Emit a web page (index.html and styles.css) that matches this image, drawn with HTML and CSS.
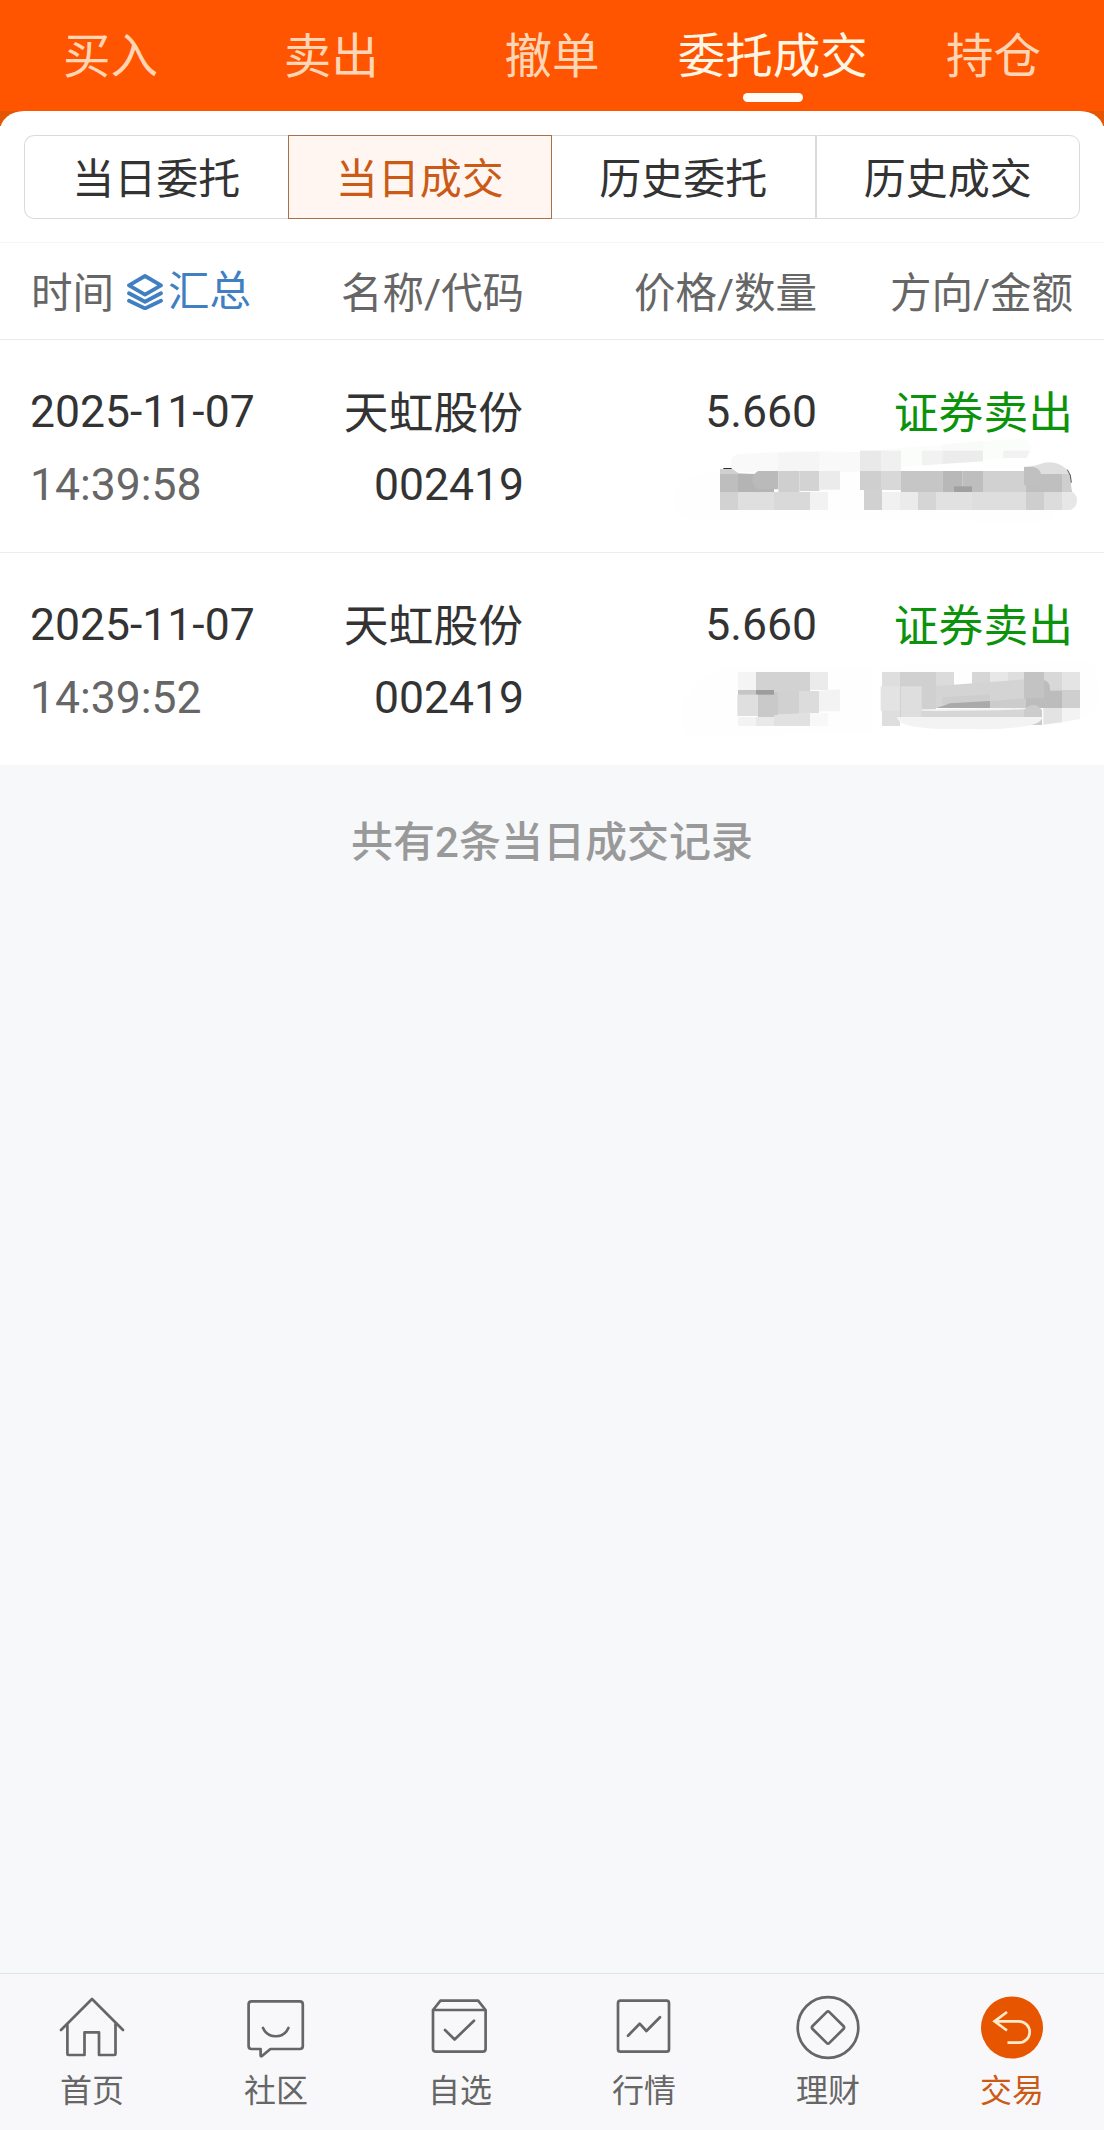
FILE: index.html
```html
<!DOCTYPE html>
<html lang="zh-CN">
<head>
<meta charset="utf-8">
<title>当日成交</title>
<link rel="stylesheet" href="styles.css">
</head>
<body>
<div class="app">
  <header class="top-tabs">
    <div class="top-tab">买入</div>
    <div class="top-tab">卖出</div>
    <div class="top-tab">撤单</div>
    <div class="top-tab top-tab-active">委托成交</div>
    <div class="top-tab">持仓</div>
  </header>
  <div class="panel-wrap">
    <div class="panel">
      <div class="segments">
        <div class="segment">当日委托</div>
        <div class="segment segment-active">当日成交</div>
        <div class="segment">历史委托</div>
        <div class="segment">历史成交</div>
      </div>
    </div>
  </div>
  <div class="grid list-head">
    <div class="head-time">时间
      <span class="summary"><svg class="layers" viewBox="0 0 36 36"><path d="M18 2 L34 11.3 L18 20.6 L2 11.3 Z M2 19.3 L18 27.8 L34 19.3 M2 26.8 L18 34.4 L34 26.8"/></svg>汇总</span>
    </div>
    <div>名称/代码</div>
    <div>价格/数量</div>
    <div>方向/金额</div>
  </div>
  <div class="grid record">
    <div class="cell"><span>2025-11-07</span><span class="muted">14:39:58</span></div>
    <div class="cell"><span class="name">天虹股份</span><span>002419</span></div>
    <div class="cell"><span>5.660</span></div>
    <div class="cell"><span class="name sell">证券卖出</span></div>
    <svg class="mask" viewBox="0 0 1332 300">
      <path fill="#fefefe" d="M180 122 Q60 135 42 190 Q40 265 90 267 L900 270 Q1120 290 1180 265 V120 Z"/>
      <path fill="#f9f9f9" d="M240 72 L400 64 L600 66 V125 H240 Q212 120 212 97 Q212 74 240 72Z"/>
      <path fill="#f5f5f5" d="M355 70 L478 65 V125 H355Z"/>
      <path fill="#fbfdfb" d="M600 64 L1085 24 Q1112 28 1114 50 Q1110 82 1080 82 L970 90 V112 H600Z"/>
      <path fill="#f9fbf8" d="M847 44 L970 32 V70 H847Z"/>
      <path fill="#e9e9e9" d="M600 62h63v62h-63z"/><path fill="#f0f0f0" d="M663 62h60v62h-60z"/>
      <path fill="#f2f2f2" d="M785 62h62v40l-62 5z"/><path fill="#ececec" d="M847 62h122v32l-122 8z"/><path fill="#f2f2f2" d="M1030 62h80l-10 22h-70z"/>
      <path fill="#fff" d="M735 110 L1020 92 L1130 108 V123 H723Z"/>
      <path fill="#d0d0d0" d="M180 117h37l18 12 50 3v54H180z"/><path fill="#333" d="M190 114h25v3h-25z"/>
      <path fill="#bebebe" d="M180 132h54v54h-54z"/><path fill="#b4b4b4" d="M234 132h108v54H234z"/>
      <path fill="#bababa" d="M295 123h60v55h-60q-18-8-18-27t18-28z"/>
      <path fill="#cfcfcf" d="M355 123h63v63h-63z"/><path fill="#d3d3d3" d="M418 123h60v60h-60z"/><path fill="#ebebeb" d="M478 123h62v56h-62z"/>
      <path fill="#d2d2d2" d="M180 186h54v54h-54z"/><path fill="#dfdfdf" d="M234 186h108v54H234z"/><path fill="#d9d9d9" d="M342 186h108v54H342z"/><path fill="#f2f2f2" d="M450 186h54v54h-54z"/>
      <path fill="#cfcfcf" d="M600 123h63v57h-63z"/><path fill="#d8d8d8" d="M663 123h60v57h-60z"/>
      <path fill="#c6c6c6" d="M723 123h124v63H723z"/><path fill="#b8b8b8" d="M847 123h61v63h-61z"/><path fill="#bebebe" d="M908 123h61v63h-61z"/>
      <path fill="#d1d1d1" d="M969 123h129v63H969z"/>
      <path fill="#dfdfdf" d="M1092 110 Q1130 108 1150 99 Q1190 90 1220 118 L1233 140 H1092Z"/>
      <path fill="#cfcfcf" d="M1206 132h27q-2 36 4 54h-31z"/><path fill="#bfbfbf" d="M1098 132h108v54h-108z"/>
      <path fill="#c0c0c0" d="M1092 111h30q22 8 22 28 0 20-22 27h-30z"/>
      <path fill="none" stroke="#555" stroke-width="3" d="M1222 119q12 15 12 39"/>
      <path fill="#a0a0a0" d="M882 169h54v17h-54z"/>
      <path fill="#d1d1d1" d="M612 180h54v60h-54z"/><path fill="#f1f1f1" d="M666 186h54v54h-54z"/><path fill="#ebebeb" d="M720 186h54v54h-54z"/>
      <path fill="#d5d5d5" d="M774 186h54v54h-54z"/><path fill="#e1e1e1" d="M828 186h108v54H828z"/><path fill="#dedede" d="M936 186h162v54H936z"/>
      <path fill="#cecece" d="M1098 186h54v54h-54z"/><path fill="#dcdcdc" d="M1152 186h54v54h-54z"/><path fill="#e7e7e7" d="M1206 186h31q14 8 14 25 0 22-20 29h-25z"/>
    </svg>
  </div>
  <div class="grid record record-last">
    <div class="cell"><span>2025-11-07</span><span class="muted">14:39:52</span></div>
    <div class="cell"><span class="name">天虹股份</span><span>002419</span></div>
    <div class="cell"><span>5.660</span></div>
    <div class="cell"><span class="name sell">证券卖出</span></div>
    <svg class="mask mask-second" viewBox="0 0 1332 300">
      <path fill="#fefefe" d="M180 55 Q110 90 72 150 Q50 240 90 260 L640 248 V55Z"/>
      <path fill="#fdfefd" d="M660 48 L1290 34 Q1320 50 1315 170 Q1300 200 1150 222 H660Z"/>
      <path fill="#f4f4f4" d="M234 66h54v54h-54z"/><path fill="#d2d2d2" d="M288 66h162v60H288z"/><path fill="#ebebeb" d="M450 66h54v54h-54z"/>
      <path fill="#c6c6c6" d="M234 120h54v15h-54z"/><path fill="#dfdfdf" d="M232 134h62v64h-62z"/>
      <path fill="#c9c9c9" d="M294 126h60v75h-60z"/><path fill="#d1d1d1" d="M354 124h63v70h-63z"/><path fill="#dcdcdc" d="M417 123h60v68h-60z"/><path fill="#f3f3f3" d="M477 122l63-4v66h-63z"/>
      <path fill="#9d9d9d" d="M288 120h54v14h-54z"/>
      <path fill="#f3f3f3" d="M234 201h54v27h-54z"/><path fill="#e9e9e9" d="M288 201h54v27h-54z"/><path fill="#e1e1e1" d="M342 196l108-9v41H342z"/><path fill="#f8f8f8" d="M450 189h54v39h-54z"/>
      <path fill="#dedede" d="M666 66h54v162h-54z"/><path fill="#e3e3e3" d="M662 109h62v73h-62z"/>
      <path fill="#d0d0d0" d="M720 66h108v135H720z"/><path fill="#dedede" d="M723 109h62v92h-62z"/>
      <path fill="#dbdbdb" d="M828 66h54v92h-54z"/><path fill="#d6d6d6" d="M936 66h54v92h-54z"/><path fill="#e7e7e7" d="M990 66h54v92h-54z"/><path fill="#dedede" d="M1044 66h54v92h-54z"/>
      <path fill="#d4d4d4" d="M828 108 L1098 88 V174 H828Z"/><path fill="#cecece" d="M847 142l143-9v30H847z"/>
      <path fill="#c3c3c3" d="M1092 66h60v108h-60z"/><path fill="#d8d8d8" d="M1152 66h54v54h-54z"/><path fill="#e4e4e4" d="M1206 66h54v54h-54z"/>
      <path fill="#bcbcbc" d="M1098 145h54V90q18 5 18 25v6h36v53h-108z"/><path fill="#cfcfcf" d="M1206 120h54v54h-54z"/>
      <path fill="#aaa" d="M828 174 Q850 168 870 160 L990 153 V174 Z"/><path fill="#ccc" d="M990 153l108-8v29H990z"/>
      <path fill="#f3f3f3" d="M785 178 L1098 174 V180 Q950 184 785 182Z"/>
      <path fill="#d6d6d6" d="M785 183 Q950 184 1095 178 V204 H785Z"/>
      <path fill="#ccc" d="M1092 180 Q1120 150 1146 180 V225 H1092Z"/>
      <path fill="#e3e3e3" d="M1150 174h56v43l-56 7z"/><path fill="#f3f3f3" d="M1206 174h54v33l-54 10z"/>
      <path fill="#f3f3f3" d="M711 201 H1147 Q1145 220 1100 228 Q1020 240 940 237 H840 Q711 232 711 201Z"/>
    </svg>
  </div>
  <div class="total">共有2条当日成交记录</div>
  <nav class="bottom-nav">
    <div class="nav-item"><svg class="nav-icon" viewBox="0 0 66 66"><path d="M2 36 L33 5 L64 36 M8.4 30 V60 Q8.4 61 9.4 61 H25.5 V38.3 H40 V61 H55.5 Q56.5 61 56.5 60 V30"/></svg>首页</div>
    <div class="nav-item"><svg class="nav-icon" viewBox="0 0 66 66"><path d="M8.6 7.3 H56.8 Q59.8 7.3 59.8 10.3 V52 Q59.8 55 56.8 55 H27.4 L19 62 Q17.6 63 17.6 61 V55 H8.6 Q5.6 55 5.6 52 V10.3 Q5.6 7.3 8.6 7.3 Z M20 34 C25 45 40.5 45 45.4 34"/></svg>社区</div>
    <div class="nav-item"><svg class="nav-icon" viewBox="0 0 66 66"><path d="M6 16 H58.6 V54.7 Q58.6 57.7 55.6 57.7 H9 Q6 57.7 6 54.7 Z M6 16 L13.5 6.7 H51.1 L58.6 16 M18 36 L27.6 45.5 L47 26.7"/></svg>自选</div>
    <div class="nav-item"><svg class="nav-icon" viewBox="0 0 66 66"><rect x="7" y="6.7" width="51" height="51" rx="2.5"/><path d="M17 41.7 L28.7 29.7 L35.4 37 L49 23.3"/></svg>行情</div>
    <div class="nav-item"><svg class="nav-icon" viewBox="0 0 66 66"><circle cx="33" cy="33.5" r="30.3"/><path d="M31.6 18.1 Q33 16.7 34.4 18.1 L48.4 32 Q49.8 33.5 48.4 35 L34.4 48.9 Q33 50.3 31.6 48.9 L17.6 35 Q16.2 33.5 17.6 32 Z"/></svg>理财</div>
    <div class="nav-item nav-item-active"><svg class="nav-icon" viewBox="0 0 66 66"><circle class="disc" cx="33" cy="33.5" r="31"/><path d="M28 18 L15.5 27.3 L28 36.5 M15.5 27.3 H40 A10.7 10.7 0 0 1 40 48.7 H28.5"/></svg>交易</div>
  </nav>
</div>
</body>
</html>
```
FILE: styles.css
```css
* { box-sizing: border-box; }
body {
  margin: 0;
  background: #f7f8fa;
  color: #333;
  font-family: Roboto, "Noto Sans CJK SC", sans-serif;
}
.app { display: flex; flex-direction: column; height: 2130px; }
.top-tabs { display: flex; height: 111px; background: #ff5500; }
.top-tab {
  position: relative;
  flex: 1;
  height: 111px;
  line-height: 114px;
  text-align: center;
  font-size: 47.5px;
  color: #ffd5b5;
}
.top-tab-active { color: #fff6e6; }
.top-tab-active::after {
  content: "";
  position: absolute;
  left: 50%;
  top: 93px;
  width: 60px;
  height: 9px;
  margin-left: -30px;
  border-radius: 4.5px;
  background: #fffdf8;
}
.panel-wrap { background: linear-gradient(#e25604 15px, #fff 15px); }
.panel {
  height: 132px;
  padding: 24px 24px 0;
  background: #fff;
  border-radius: 24px 24px 0 0 / 20px 20px 0 0;
  border-bottom: 1px solid #f5f5f5;
}
.segments { display: flex; height: 84px; }
.segment {
  flex: 1;
  border: 1px solid #d8dadc;
  line-height: 88px;
  text-align: center;
  font-size: 42px;
}
.segment:first-child { border-right: 0; border-radius: 10px 0 0 10px; }
.segment:nth-child(3) { border-left: 0; }
.segment:last-child { border-radius: 0 10px 10px 0; }
.segment-active { border-color: #aa7148; background: #fff6f2; color: #cc5a17; }
.grid {
  display: grid;
  grid-template-columns: 254px 239px 293px 256px;
  padding: 0 31px;
  background: #fff;
  text-align: right;
}
.list-head {
  height: 97px;
  line-height: 101px;
  border-bottom: 1px solid #e9eaeb;
  font-size: 41.5px;
  color: #666;
}
.head-time { display: flex; gap: 13px; }
.summary { display: flex; height: 98px; line-height: 100px; align-items: center; gap: 5px; color: #407fc2; }
.layers {
  width: 36px;
  height: 36px;
  fill: none;
  stroke: #407fc2;
  stroke-width: 3.8;
  stroke-linejoin: round;
  stroke-linecap: round;
}
.record {
  position: relative;
  height: 213px;
  padding-top: 36px;
  border-bottom: 1px solid #ebecec;
  font-size: 44.5px;
}
.record-last { height: 212px; border-bottom: 0; }
.cell { display: flex; flex-direction: column; line-height: 73px; }
.cell:first-child { margin-left: -1px; text-align: left; }
.name { height: 73px; margin-right: 1px; line-height: 75px; font-size: 44.8px; }
.muted { color: #666; }
.sell { margin-right: 0; color: #0b930b; }
.mask { position: absolute; left: 660px; top: 90px; width: 444px; height: 100px; }
.mask-second { top: 97px; }
.total {
  flex: 1;
  padding-top: 47px;
  line-height: 62px;
  text-align: center;
  font-size: 42px;
  font-weight: 500;
  color: #999;
}
.bottom-nav {
  display: flex;
  height: 157px;
  padding-top: 20px;
  border-top: 1px solid #e2e4e6;
  background: #f8f8fa;
}
.nav-item {
  flex: 1;
  display: flex;
  flex-direction: column;
  align-items: center;
  gap: 8px;
  font-size: 32px;
  line-height: 46px;
  color: #666;
}
.nav-icon {
  width: 66px;
  height: 66px;
  fill: none;
  stroke: #666;
  stroke-width: 2.7;
  stroke-linecap: round;
  stroke-linejoin: round;
}
.nav-item-active { color: #cc5a17; }
.nav-item-active .nav-icon { stroke: #ffeacb; stroke-linecap: butt; stroke-linejoin: miter; }
.nav-item-active .disc { fill: #e85500; stroke: none; }
```
